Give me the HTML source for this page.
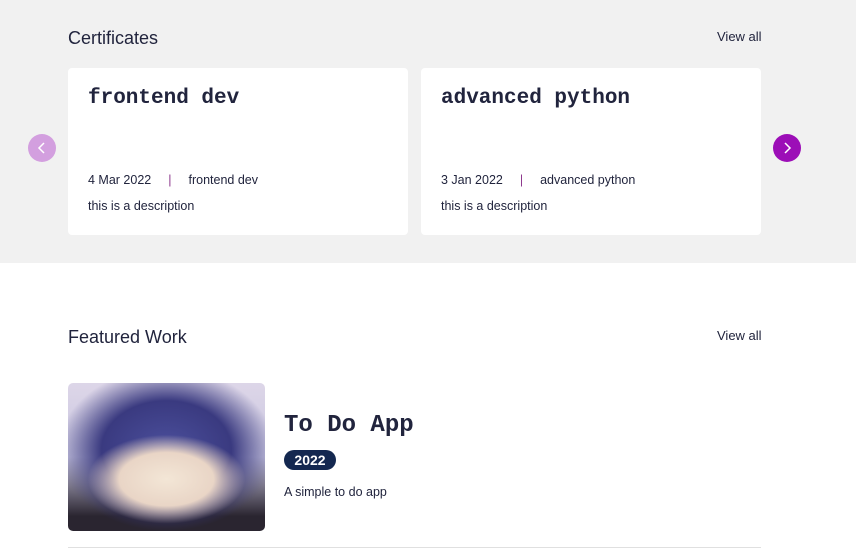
<!DOCTYPE html>
<html><head><style>
body{margin:0;width:856px;height:550px;overflow:hidden;background:#fff;font-family:"Liberation Sans",sans-serif;color:#21243d}
.top{position:absolute;left:0;top:0;width:856px;height:263px;background:#f1f1f1}
.h{position:absolute;font-size:18px;color:#21243d}
.va{position:absolute;font-size:13px;color:#21243d}
.card{position:absolute;top:68px;width:340px;height:167px;background:#fff;border-radius:4px}
.card .t{position:absolute;left:20px;top:19px;font-family:"Liberation Mono",monospace;font-weight:bold;font-size:21px;color:#21243d}
.card .m{position:absolute;left:20px;top:105px;font-size:12.5px;color:#21243d}
.card .m span{color:#8e3a8e;margin:0 17px}
.card .d{position:absolute;left:20px;top:131px;font-size:12.5px}
.btn{position:absolute;top:134px;width:28px;height:28px;border-radius:50%}
.img{position:absolute;left:68px;top:383px;width:197px;height:148px;border-radius:5px;overflow:hidden;
background:radial-gradient(ellipse 40% 30% at 50% 65%,#f3e6d6 0,#e9d5c6 60%,transparent 100%),radial-gradient(ellipse 55% 55% at 50% 45%,#4b4f9c 0,#3a3a80 60%,transparent 100%),linear-gradient(180deg,#ddd6e8,#c9c6e0 50%,#2a2530 90%)}
</style></head><body>
<div class="top"></div>
<div class="h" style="left:68px;top:28px">Certificates</div>
<div class="va" style="left:717px;top:29px">View all</div>
<div class="btn" style="left:28px;background:#d39fdf"><svg width="28" height="28"><path d="M16 9l-5 5 5 5" stroke="#fff" stroke-width="1.5" fill="none"/></svg></div>
<div class="btn" style="left:773px;background:#9c0eb7"><svg width="28" height="28"><path d="M12 9l5 5-5 5" stroke="#fff" stroke-width="1.5" fill="none"/></svg></div>
<div class="card" style="left:68px"><div class="t">frontend dev</div><div class="m">4 Mar 2022<span>|</span>frontend dev</div><div class="d">this is a description</div></div>
<div class="card" style="left:421px"><div class="t">advanced python</div><div class="m">3 Jan 2022<span>|</span>advanced python</div><div class="d">this is a description</div></div>
<div class="h" style="left:68px;top:327px">Featured Work</div>
<div class="va" style="left:717px;top:328px">View all</div>
<div class="img"></div>
<div style="position:absolute;left:284px;top:412px;font-family:'Liberation Mono',monospace;font-weight:bold;font-size:24px">To Do App</div>
<div style="position:absolute;left:284px;top:450px;width:52px;height:20px;border-radius:10px;background:#142850;color:#fff;font-weight:bold;font-size:14px;text-align:center;line-height:20px">2022</div>
<div style="position:absolute;left:284px;top:485px;font-size:12.5px">A simple to do app</div>
<div style="position:absolute;left:68px;top:547px;width:693px;height:1px;background:#e0e0e0"></div>
</body></html>
